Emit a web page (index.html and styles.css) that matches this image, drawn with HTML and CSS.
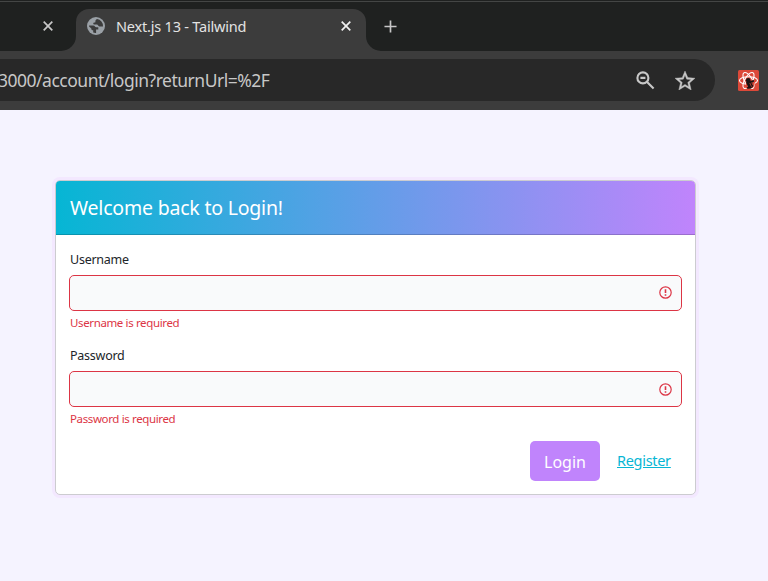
FILE: index.html
```html
<!DOCTYPE html>
<html lang="en">
<head>
<meta charset="utf-8">
<title>Next.js 13 - Tailwind</title>
<link rel="stylesheet" href="styles.css">
</head>
<body>
<header class="browser">
  <div class="tabs">
    <div class="tab-previous">
      <svg class="close" viewBox="0 0 10 10"><path d="M.7.7l8.6 8.6M9.3.7L.7 9.3"/></svg>
    </div>
    <div class="tab-active">
      <svg class="globe" viewBox="0 0 18 18"><circle cx="9" cy="9" r="9" fill="#9aa0a6"/><path d="M10 2.1a7 7 0 0 1 6 7.4h-3.6c-1.3 0-1.1-1.9-2.6-1.9H7.3c-1.4 0-1.4-2 0-2 .9 0 1.1-.4 1.1-1.2 0-1.1.5-1.8 1.6-2.3z" fill="#3c3c3c"/><path d="M2 8.4h4.2c1.9 0 1.8 1.8 3 1.8h2.1v2.3H9.1v3.4c-1 .1-2 0-2.9-.3v-2.3c-1.3 0-1.9-.6-1.9-1.9L2.1 9.5z" fill="#3c3c3c"/></svg>
      <span class="tab-title">Next.js 13 - Tailwind</span>
      <svg class="close bright" viewBox="0 0 10 10"><path d="M.7.7l8.6 8.6M9.3.7L.7 9.3"/></svg>
    </div>
    <div class="tab-new">
      <svg class="plus" viewBox="0 0 14 14"><path d="M7 .5v13M.5 7h13"/></svg>
    </div>
  </div>
  <div class="toolbar">
    <div class="address">
      <span class="url">3000/account/login?returnUrl=%2F</span>
      <svg class="zoom" viewBox="0 0 19 19"><circle cx="6.9" cy="6.9" r="5.5"/><path d="M4.4 6.9h5M10.8 10.8l6.8 6.8"/></svg>
      <svg class="star" viewBox="2 2 20 19"><path d="M22 9.24l-7.19-.62L12 2 9.19 8.63 2 9.24l5.46 4.73L5.82 21 12 17.27 18.18 21l-1.63-7.03L22 9.24zM12 15.4l-3.76 2.27 1-4.28-3.32-2.88 4.38-.38L12 6.1l1.71 4.04 4.38.38-3.32 2.88 1 4.28L12 15.4z"/></svg>
    </div>
    <svg class="extension" viewBox="0 0 21 21"><rect width="21" height="21" rx="1.5" fill="#dc4939"/><g fill="none" stroke="#fff" stroke-width="1.1"><ellipse cx="10.5" cy="10.5" rx="9" ry="3.8"/><ellipse cx="10.5" cy="10.5" rx="9" ry="3.8" transform="rotate(60 10.5 10.5)"/><ellipse cx="10.5" cy="10.5" rx="9" ry="3.8" transform="rotate(120 10.5 10.5)"/></g><path d="M8 12.5l6-3 3 3-2 5-4 1.5-3-1z" fill="#dc4939"/><g fill="#1a1414"><circle cx="10.2" cy="10.2" r="2.3"/><path d="M8 12.2l3-.6 4.8-1.5.4 1.3-2 1 1.2 3.5-2.4 2.6-3.6.2-.6-1.2 1.3-.8z"/></g><path d="M11.8 13l1.7 3.8M13.7 12.4l1.2 2.8" stroke="#dc4939" stroke-width=".7"/></svg>
  </div>
</header>
<main class="page">
  <section class="card">
    <h1 class="card-header"><span class="heading-text">Welcome back to Login!</span></h1>
    <form class="card-body">
      <div class="field">
        <label class="label" for="username">Username</label>
        <div class="control">
          <input class="input" id="username" type="text">
          <svg class="alert" viewBox="0 0 13 13"><circle cx="6.5" cy="6.5" r="5.7"/><path class="mark" d="M6.5 3.2v3.9M6.5 8.2v1.5"/></svg>
        </div>
        <p class="error">Username is required</p>
      </div>
      <div class="field">
        <label class="label" for="password">Password</label>
        <div class="control">
          <input class="input" id="password" type="password">
          <svg class="alert" viewBox="0 0 13 13"><circle cx="6.5" cy="6.5" r="5.7"/><path class="mark" d="M6.5 3.2v3.9M6.5 8.2v1.5"/></svg>
        </div>
        <p class="error">Password is required</p>
      </div>
      <div class="actions">
        <button class="login" type="button">Login</button>
        <a class="register" href="#">Register</a>
      </div>
    </form>
  </section>
</main>
</body>
</html>
```
FILE: styles.css
```css
* { box-sizing: border-box; }
body {
  margin: 0;
  height: 581px;
  overflow: hidden;
  background: #f5f3ff;
  font-family: "Noto Sans", "Open Sans", sans-serif;
}
svg { display: block; flex: none; }

.browser { height: 110px; background: #3c3c3c; }
.tabs {
  display: flex;
  height: 51px;
  padding-top: 9px;
  background: linear-gradient(#1f2120 1px, #444645 1px, #444645 2px, #1f2120 2px);
}
.tab-previous, .tab-new { background: #3c3c3c; position: relative; z-index: 0; }
.tab-previous::before, .tab-new::before {
  content: "";
  position: absolute;
  z-index: -1;
  inset: 0;
  background: #1f2120;
}
.tab-previous { width: 76px; padding: 12px 0 0 43px; }
.tab-previous::before { border-bottom-right-radius: 15px; }
.tab-active {
  display: flex;
  align-items: center;
  width: 290px;
  height: 42px;
  padding: 0 15px 8px 11px;
  border-radius: 13px 13px 0 0;
  background: #3c3c3c;
}
.tab-new { flex: 1; padding: 11px 0 0 18px; }
.tab-new::before { border-bottom-left-radius: 15px; }
.close { width: 10px; height: 10px; fill: none; stroke: #c7c7c7; stroke-width: 1.7; }
.bright { stroke: #f0f0f0; margin-left: auto; }
.globe { width: 18px; height: 18px; }
.tab-title { margin-left: 11px; color: #e3e3e3; font-size: 14.5px; letter-spacing: -0.2px; white-space: nowrap; }
.plus { width: 13px; height: 13px; fill: none; stroke: #c7c7c7; stroke-width: 1.8; }

.toolbar { display: flex; align-items: center; height: 59px; padding: 0 9px 1px 0; }
.address {
  display: flex;
  align-items: center;
  width: 715px;
  height: 42px;
  padding-right: 20px;
  border-radius: 0 21px 21px 0;
  background: #282828;
}
.url { margin-left: -2px; color: #c7c7c7; font-size: 17.5px; letter-spacing: -0.49px; white-space: nowrap; }
.zoom { width: 19px; height: 19px; margin-left: auto; fill: none; stroke: #c7c7c7; stroke-width: 2.1; }
.star { width: 20px; height: 19px; margin-left: 20px; fill: #c7c7c7; stroke: #c7c7c7; stroke-width: .4; }
.extension { width: 21px; height: 21px; margin-left: auto; }

.page { padding: 70px 72px 0 55px; }
.card {
  height: 315px;
  border: 1px solid #ccccd0;
  border-radius: 5px;
  background: #fff;
  box-shadow: 0 0 0 3px #f3e8ff;
}
.card-header {
  display: flex;
  align-items: center;
  height: 54px;
  margin: 0;
  padding: 0 14px;
  border-bottom: 1px solid rgba(0, 0, 0, .18);
  border-radius: 4px 4px 0 0;
  background: linear-gradient(to right, #06b6d4, #c084fc) border-box;
  color: #fff;
  font-size: 19.5px;
  font-weight: 400;
  letter-spacing: -0.2px;
}
.card-body { padding: 13px 13px 0; }
.field { height: 96px; }
.label { display: block; height: 27px; padding-left: 1px; color: #212529; font-size: 12.5px; line-height: 23px; letter-spacing: -0.25px; }
.control { position: relative; height: 36px; }
.input {
  display: block;
  width: 100%;
  height: 36px;
  margin: 0;
  border: 1px solid #dc3545;
  border-radius: 5px;
  background: #f9fafb;
}
.alert { position: absolute; top: 11px; right: 10px; width: 13px; height: 13px; fill: none; stroke: #dc3545; stroke-width: 1.2; }
.mark { stroke-width: 1.6; }
.field + .field .alert { top: 12px; }
.error { margin: 3px 0 0; padding-left: 1px; color: #dc3545; font-size: 11.5px; line-height: 17px; letter-spacing: -0.37px; }
.actions { display: flex; padding: 1px 0 0 461px; }
.login {
  width: 70px;
  height: 40px;
  padding: 2px 0 0;
  border: 0;
  border-radius: 5px;
  background: #c084fc;
  color: #fff;
  font: 16px "Noto Sans", sans-serif;
}
.register { margin-left: 17px; color: #06b6d4; font-size: 14.5px; line-height: 38px; letter-spacing: -0.3px; }
```
